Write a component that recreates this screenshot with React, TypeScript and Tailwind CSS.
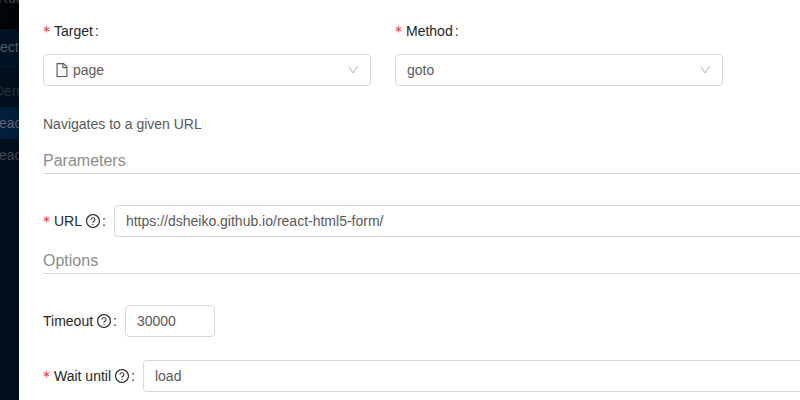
import type { ReactNode } from "react";
import { AiOutlineDown, AiOutlineFile, AiOutlineQuestionCircle } from "react-icons/ai";

const ICON_BOX = "64 64 896 896";

function Label({ text, required, help }: { text: string; required?: boolean; help?: boolean }) {
  return (
    <label className="flex shrink-0 items-center whitespace-pre text-[#262626]">
      {required && <span className="mr-1 w-[7px] font-['DejaVu_Sans',sans-serif] leading-none text-[#f5222d]">*</span>}
      <span>{text}</span>
      {help && <AiOutlineQuestionCircle viewBox={ICON_BOX} className="ml-1 size-3.5" />}
      <span className="mr-2 ml-0.5">:</span>
    </label>
  );
}

function Box({ className, children }: { className: string; children: ReactNode }) {
  return (
    <div className={`flex h-8 items-center rounded border border-[#d9d9d9] bg-white px-[11px] text-[#595959] ${className}`}>
      {children}
    </div>
  );
}

function Select({ children }: { children: ReactNode }) {
  return (
    <Box className="w-[328px] justify-between">
      <span className="flex items-center">{children}</span>
      <AiOutlineDown viewBox={ICON_BOX} className="size-3 text-[#bfbfbf]" />
    </Box>
  );
}

function Heading({ children }: { children: ReactNode }) {
  return <h3 className="h-[26px] border-b border-[#d9d9d9] text-base leading-[26px] text-[#8c8c8c]">{children}</h3>;
}

function Sidebar() {
  return (
    <aside className="h-full w-[19px] shrink-0 overflow-hidden bg-[#000f1c] whitespace-nowrap text-[#41474d]">
      <div className="h-[29px] bg-[#000509]">
        <div className="-ml-[2px] -translate-y-[13px] leading-[22px]">Rur</div>
      </div>
      <div className="h-[38px] border-b border-[#071a29] bg-[#001223] leading-[37px] text-[#555b61]">ect</div>
      <div className="mt-2 -ml-1.5 h-8 leading-8 text-[#2a323a]">Demo</div>
      <div className="h-8 bg-[#001f3d] leading-8 text-[#5d656d]">
        <span className="-ml-px">eact</span>
      </div>
      <div className="-ml-px h-8 leading-8">eact</div>
    </aside>
  );
}

export default function App() {
  return (
    <div className="flex h-[400px] w-[800px] overflow-hidden bg-white font-['Liberation_Sans',Arial,sans-serif] text-sm">
      <Sidebar />
      <main className="relative min-w-0 grow bg-white pt-5 pl-6 shadow-[-2px_0_8px_rgba(0,0,0,0.15)]">
        <div className="flex gap-6">
          <div>
            <div className="mb-3 flex h-[22px]"><Label text="Target" required /></div>
            <Select><AiOutlineFile viewBox={ICON_BOX} className="mr-1 size-3.5" />page</Select>
          </div>
          <div>
            <div className="mb-3 flex h-[22px]"><Label text="Method" required /></div>
            <Select>goto</Select>
          </div>
        </div>
        <p className="mt-[27px] mb-[13px] leading-[22px] text-[#595959]">Navigates to a given URL</p>
        <Heading>Parameters</Heading>
        <div className="mt-[31px] mb-[11px] flex">
          <Label text="URL" required help />
          <Box className="grow rounded-r-none border-r-0">https://dsheiko.github.io/react-html5-form/</Box>
        </div>
        <Heading>Options</Heading>
        <div className="mt-[31px] flex">
          <Label text="Timeout" help />
          <Box className="w-[90px]">30000</Box>
        </div>
        <div className="mt-[23px] flex">
          <Label text="Wait until" required help />
          <Box className="grow rounded-r-none border-r-0">load</Box>
        </div>
      </main>
    </div>
  );
}
